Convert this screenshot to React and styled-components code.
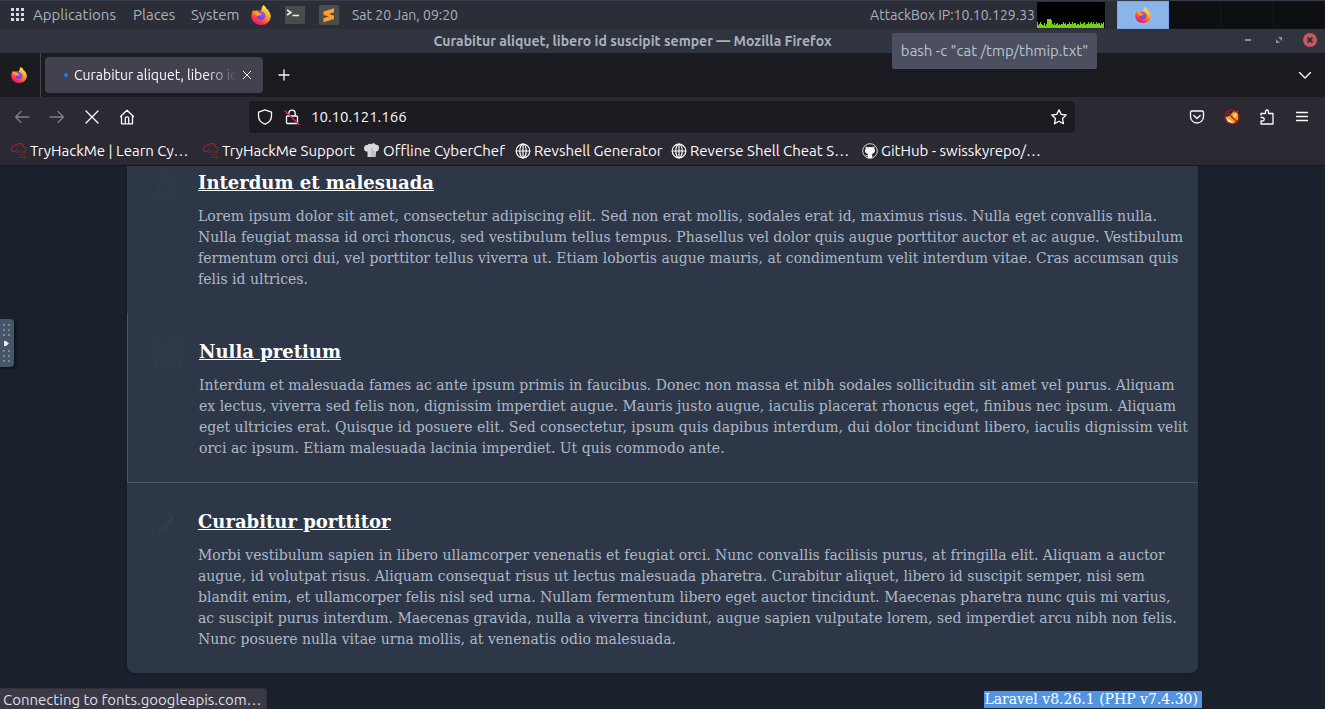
import React from "react";
import styled, { createGlobalStyle } from "styled-components";

const GlobalStyle = createGlobalStyle`
  * { box-sizing: border-box; }
  html, body { margin: 0; background: #1a202c; }
  button { font: inherit; color: inherit; background: none; border: 0; padding: 0; margin: 0; cursor: pointer; }
  svg { display: block; flex: none; }
`;

const ui = `"Ubuntu", "Noto Sans", sans-serif`;

const Desktop = styled.div`
  position: relative;
  display: flex;
  flex-direction: column;
  height: 100vh;
  overflow: hidden;
  font: 15px/20px ${ui};
  color: #fbfbfe;
`;

/* ---------- desktop panel ---------- */
const Panel = styled.header`
  display: flex;
  align-items: center;
  justify-content: space-between;
  flex: none;
  height: 29px;
  padding-left: 10px;
  background: #2b2e37;
  border-top: 1px solid #383c4a;
  color: #a9b1bd;
`;
const PanelGroup = styled.div`
  display: flex;
  align-items: center;
  height: 28px;
`;
const PanelMenu = styled.button`
  display: flex;
  align-items: center;
  gap: 9px;
  width: ${(p) => p.$width}px;
  white-space: nowrap;
`;
const Launcher = styled.button`
  display: flex;
  width: 20px;
  height: 20px;
  margin-right: ${(p) => p.$gap || 14}px;
`;
const Clock = styled.time`
  font-size: 14px;
  white-space: nowrap;
`;
const AddressLabel = styled.span`
  font-size: 14px;
  white-space: nowrap;
  margin-right: 2px;
`;
const Workspaces = styled.div`
  display: flex;
  height: 28px;
  margin-left: 12px;
`;
const Workspace = styled.button`
  display: flex;
  align-items: center;
  justify-content: center;
  width: 52px;
  height: 28px;
  background: ${(p) => (p.$active ? "#8ab4ea" : "#0e0f12")};
  border: 1px solid ${(p) => (p.$active ? "#78a8e8" : "#121317")};
`;

/* ---------- window frame ---------- */
const TitleBar = styled.div`
  display: grid;
  grid-template-columns: 8px 1fr 68px;
  align-items: center;
  flex: none;
  height: 24px;
  padding-right: 8px;
  padding-left: 8px;
  background: #2f343f;
  color: #a9b1bd;
`;
const WindowTitle = styled.h1`
  grid-column: 2;
  margin: 0;
  font-size: 14px;
  font-weight: 600;
  line-height: 24px;
  text-align: center;
`;
const WindowButtons = styled.div`
  display: flex;
  align-items: center;
  justify-content: flex-end;
  gap: 17px;
  padding-bottom: 2px;
`;

const TabStrip = styled.nav`
  display: flex;
  align-items: center;
  flex: none;
  height: 44px;
  background: #1c1b22;
`;
const FirefoxView = styled.button`
  display: flex;
  align-items: center;
  justify-content: center;
  width: 41px;
  height: 44px;
  padding-right: 3px;
  border-right: 1px solid #45444d;
`;
const Tab = styled.div`
  display: flex;
  align-items: center;
  width: 218px;
  height: 36px;
  margin-left: 4px;
  padding: 0 10px 0 19px;
  border-radius: 4px;
  background: #42414d;
  font-size: 14px;
`;
const LoadingDot = styled.span`
  width: 4px;
  height: 4px;
  margin-right: 6px;
  border-radius: 50%;
  background: #0a84ff;
`;
const TabTitle = styled.span`
  flex: 1;
  overflow: hidden;
  white-space: nowrap;
  mask-image: linear-gradient(to left, transparent, #000 32px);
`;
const TabClose = styled.button`
  display: flex;
  margin-left: 4px;
`;
const NewTab = styled.button`
  display: flex;
  margin-left: 13px;
`;
const TabList = styled.button`
  display: flex;
  margin-left: auto;
  margin-right: 12px;
`;

const NavBar = styled.div`
  display: flex;
  align-items: center;
  flex: none;
  height: 39px;
  padding: 0 15px 0 14px;
  background: #2b2a33;
`;
const NavButtons = styled.div`
  display: flex;
  align-items: center;
  gap: 19px;
  width: 235px;
`;
const IconButton = styled.button`
  display: flex;
  opacity: ${(p) => (p.disabled ? 0.4 : 1)};
`;
const UrlBar = styled.form`
  display: flex;
  align-items: center;
  gap: 11px;
  flex: 1;
  height: 32px;
  padding: 0 8px;
  border-radius: 4px;
  background: #1c1b22;
`;
const UrlInput = styled.input`
  flex: 1;
  min-width: 0;
  padding: 0;
  border: 0;
  outline: 0;
  background: none;
  color: #fbfbfe;
  font: 15px/20px ${ui};
`;
const ToolButtons = styled.div`
  display: flex;
  align-items: center;
  gap: 19px;
  margin-left: 114px;
`;
const Bookmarks = styled.nav`
  display: grid;
  grid-template-columns: 192px 161px 151px 156px 191px 1fr;
  align-items: center;
  flex: none;
  height: 30px;
  padding: 0 11px;
  background: #2b2a33;
  border-bottom: 1px solid #15141a;
`;
const Bookmark = styled.a`
  display: flex;
  align-items: center;
  gap: 3px;
  color: inherit;
  text-decoration: none;
  white-space: nowrap;
`;

/* ---------- web page ---------- */
const Page = styled.main`
  flex: 1;
  min-height: 0;
  overflow: hidden;
  background: #1a202c;
  font: 14px/21px "DejaVu Serif", serif;
`;
const Content = styled.div`
  width: calc(100% - 254px);
  margin: 0 auto;
`;
const Card = styled.div`
  background: #2d3748;
  border-radius: 0 0 8px 8px;
  box-shadow: 0 1px 3px rgba(0, 0, 0, 0.2);
`;
const Section = styled.section`
  display: grid;
  grid-template-columns: 32px 1fr;
  column-gap: 15px;
  padding: ${(p) => (p.$clipped ? 3 : 25)}px 8px 23px 24px;
  border: 0 solid #4a5568;
  border-width: ${(p) => (p.$bordered ? "0 0 1px 1px" : "0")};
`;
const SectionTitle = styled.h2`
  margin: 0 0 9px;
  font-size: 18px;
  line-height: 28px;
  font-weight: 600;
`;
const SectionLink = styled.a`
  color: #fff;
  text-decoration: underline;
`;
const SectionText = styled.p`
  margin: 0;
  color: #adb8c6;
`;
const Footer = styled.footer`
  display: flex;
  justify-content: flex-end;
  margin: 16px -4px 0 0;
`;
const Selected = styled.span`
  height: 17px;
  margin-top: 2px;
  padding-right: 4px;
  line-height: 17px;
  background: #5294e2;
  color: #fff;
`;

/* ---------- overlays ---------- */
const Tooltip = styled.div`
  position: absolute;
  top: 33px;
  right: 228px;
  width: 205px;
  height: 36px;
  border-radius: 2px;
  background: #4b4f60;
  color: #bac3cf;
  line-height: 36px;
  text-align: center;
  white-space: nowrap;
`;
const StatusBar = styled.div`
  position: absolute;
  left: 0;
  bottom: 0;
  height: 21px;
  padding: 0 4px 0 3px;
  border: 1px solid #32313b;
  border-width: 1px 1px 0 0;
  border-radius: 0 3px 0 0;
  background: #3a3944;
  color: #dedee6;
  line-height: 21px;
  white-space: nowrap;
`;
const SideHandle = styled.button`
  position: absolute;
  left: 0;
  top: 319px;
  width: 14px;
  height: 48px;
  border-radius: 0 4px 4px 0;
  background: #475569;
  box-shadow: 2px 2px 2px #10141b;
`;

/* ---------- drawings ---------- */
const Firefox = ({ size = 20, id }) => (
  <svg width={size} height={size} viewBox="0 0 20 20" aria-hidden="true">
    <defs>
      <linearGradient id={id + "o"} x1="0.85" y1="0.05" x2="0.3" y2="1">
        <stop offset="0" stopColor="#fff44f" />
        <stop offset="0.35" stopColor="#ffb32c" />
        <stop offset="0.62" stopColor="#ff6a2a" />
        <stop offset="0.85" stopColor="#f5295c" />
        <stop offset="1" stopColor="#e01583" />
      </linearGradient>
      <radialGradient id={id + "p"} cx="0.6" cy="0.3" r="0.8">
        <stop offset="0" stopColor="#9059ff" />
        <stop offset="1" stopColor="#6b3fd0" />
      </radialGradient>
    </defs>
    <path d="M12.3 0c2 1.300 3 2.700 3.400 4.100 1 .3 1.500 1 1.900 1.800 1.500 1.800 2.200 3.800 2.200 5.900A9.600 8.700 0 0 1 10 20C4.500 20 .3 16.200.3 11 .3 8.300 1.300 6 2.700 4.400c0 .8.100 1.300.4 1.800C4.600 5.300 6 5.500 7.300 5.800 8.800 5.600 9.500 5.700 10 6c.6-2.600 1-4.500 2.300-6z" fill={"url(#" + id + "o)"} />
    <path d="M7 6.400c2.700-1 7 .3 7.400 4.200.2 2.700-1.800 4.500-4.200 4.500-2.700 0-4.500-1.700-4.700-4 1.200.4 2.200.2 3-.5.6-.6 1.400-.6 1.700-1.200-.3-.8-1.800-.7-2.300-1.100z" fill={"url(#" + id + "p)"} />
    <path d="M2.500 6.800C4.300 5.500 6.400 6 7.300 7.200l2.900 1.300c-.3.800-1.300 1-1.800 1.500-1 1-2.500.8-3.300.2z" fill="#ff9a2c" />
  </svg>
);

const GridIcon = () => (
  <svg width="14" height="14" viewBox="0 0 14 14" fill="#d3dae3" aria-hidden="true">
    {[0, 5, 10].map((y) => [0, 5, 10].map((x) => <rect key={x + "-" + y} x={x + 1} y={y} width="3" height="3" />))}
  </svg>
);

const TerminalIcon = () => (
  <svg width="20" height="20" viewBox="0 0 20 20" aria-hidden="true">
    <rect x="0" y="1" width="20" height="18" rx="1" fill="#4b4d4d" />
    <path d="M2 5l4 2.500L2 10M7.500 10.500H14" fill="none" stroke="#eee" strokeWidth="1.500" />
  </svg>
);

const SublimeIcon = () => (
  <svg width="20" height="20" viewBox="0 0 20 20" aria-hidden="true">
    <rect width="20" height="20" rx="1" fill="#4b4d4d" />
    <path d="M4.500 6.500L15 3.300v4L10 9l5 1.700v3.200L4.500 17.200v-4L9.800 11.500 4.500 9.700z" fill="#ff9d2f" />
    <path d="M4.500 9.700l5.300 1.800 5.200 1.600-10.500-3z" fill="#d07a18" />
  </svg>
);

const loads = [6, 3, 4, 6, 4, 3, 3, 5, 2, 4, 9, 9, 9, 9, 8, 4, 3, 5, 3, 4, 5, 3, 4, 3, 4, 4, 6, 4, 5, 3, 4, 4, 6, 4, 4, 6, 4, 5, 5, 3, 4, 4, 3, 6, 4, 4, 5, 6, 3, 4, 4, 6, 4, 5, 6, 4, 6, 4, 4, 6, 4, 5, 5, 3, 5, 4, 6];
const LoadGraph = () => (
  <svg width="68" height="26" viewBox="0 0 68 26" aria-label="CPU load">
    <rect width="68" height="26" fill="#000" />
    {loads.map((h, i) => <rect key={i} x={i} y={26 - h} width="1" height={h} fill="#73d216" />)}
  </svg>
);

const Line = ({ size = 16, width = 1.3, color = "#fbfbfe", children }) => (
  <svg width={size} height={size} viewBox="0 0 16 16" fill="none" stroke={color} strokeWidth={width} strokeLinecap="round" strokeLinejoin="round" aria-hidden="true">
    {children}
  </svg>
);

const Hackme = () => (
  <Line color="#a81a22" width={1.2}>
    <path d="M5 8.500H3a2.500 2.500 0 0 1-.2-5A2.500 2.500 0 0 1 6 2a3.600 3.600 0 0 1 6.500 2A2.200 2.200 0 0 1 14.500 7.500M5.500 6.500h1M6.500 9.500l1-1.500M10.500 9h4M8.500 12h1.500M12.500 11.500H14M9.500 14.500h2M13 14l1.500.8" />
  </Line>
);
const Chef = () => (
  <svg width="16" height="15" viewBox="0 0 16 15" aria-hidden="true">
    <path d="M3.500 14V8.500C1 9 0 7 0 5.200 0 3 1.500 1.500 3.500 2 4.500.4 6 .5 7.200 1.200c1.500-1.500 3.800-1 4.600.6 2-.3 3.200 1 3.200 3 0 2.200-1 3.700-3 3.700L11.600 14z" fill="#d8d8d8" />
    <path d="M8 5v9M10 8v6" stroke="#aaa" />
  </svg>
);
const Globe = () => (
  <Line width={1.2}>
    <circle cx="8" cy="8" r="6.800" />
    <ellipse cx="8" cy="8" rx="3.200" ry="6.800" />
    <path d="M1.200 8h13.600M8 1.200v13.600" />
  </Line>
);
const Github = () => (
  <svg width="16" height="16" viewBox="0 0 16 16" aria-hidden="true">
    <circle cx="8" cy="8" r="7.300" fill="#24232b" stroke="#d8d8dc" strokeWidth="1" />
    <path d="M3.700 3.400c.8 0 1.500.4 2 .8a9 9 0 0 1 4.600 0c.6-.5 1.200-.8 2-.8.3.8.2 1.500 0 2 1.600 2.500.4 5.200-2.500 5.500.4.5.5 1 .5 1.600v2.400H5.700v-1.800c-1.500.3-1.900-.4-2.300-1.200.8.100 1.200.7 2.300.4 0-.6.2-1 .5-1.400C3.300 10.600 2.100 8 3.700 5.400c-.2-.6-.3-1.200 0-2z" fill="#f5f5f5" />
  </svg>
);
const FoxProxy = () => (
  <svg width="16" height="16" viewBox="0 0 16 16" aria-hidden="true">
    <path d="M1 8l4-1 5-5 1 2 3-2v9l-5 4-5-3z" fill="#f59a23" />
    <path d="M2 9l4 2 3 3-5-1z" fill="#fff0d0" />
    <path d="M9 6l3-3 1 4-3 2z" fill="#ffd062" />
    <circle cx="8" cy="8" r="7" fill="none" stroke="#b51a1a" strokeWidth="1.200" />
    <path d="M3 3l10 10" stroke="#b51a1a" strokeWidth="1.200" />
  </svg>
);

const Faint = ({ children }) => (
  <svg width="32" height="32" viewBox="0 0 32 32" fill="none" stroke="#2f3e43" strokeWidth="1.500" strokeLinejoin="round" aria-hidden="true">
    {children}
  </svg>
);
const Tree = () => (
  <Faint>
    <path d="M15.500 1l1 2 2 .3-1.500 1.500.4 2-1.900-1-1.900 1 .4-2-1.500-1.500 2-.3zM15.500 6L10 13h2.500L7 20h2.500L4 26.500h23L21.500 20H24l-5.500-7H21zM13 27v4h5v-4M15 12h2M12 18h1M18 19h2M10 23h2" />
  </Faint>
);
const Gift = () => (
  <Faint>
    <path d="M3 8h26v6H3zM4 14v15h24V14M13 8v21M18 8v21M15.500 7C12 7 5 9 4 5s6-5 11.500 2C19 1 26 1 27 5s-6 2-11.500 2zM1 3h4M26 3h5" />
  </Faint>
);
const Cane = () => (
  <Faint>
    <path d="M7 26L19 13c5-4 1-9-5-5" stroke="#30403f" strokeWidth="4" strokeDasharray="4 1" />
  </Faint>
);

const bookmarks = [
  ["TryHackMe | Learn Cy…", Hackme],
  ["TryHackMe Support", Hackme],
  ["Offline CyberChef", Chef],
  ["Revshell Generator", Globe],
  ["Reverse Shell Cheat S…", Globe],
  ["GitHub - swisskyrepo/…", Github],
];

const sections = [
  {
    title: "Interdum et malesuada",
    Icon: Tree,
    clipped: true,
    text: "Lorem ipsum dolor sit amet, consectetur adipiscing elit. Sed non erat mollis, sodales erat id, maximus risus. Nulla eget convallis nulla. Nulla feugiat massa id orci rhoncus, sed vestibulum tellus tempus. Phasellus vel dolor quis augue porttitor auctor et ac augue. Vestibulum fermentum orci dui, vel porttitor tellus viverra ut. Etiam lobortis augue mauris, at condimentum velit interdum vitae. Cras accumsan quis felis id ultrices.",
  },
  {
    title: "Nulla pretium",
    Icon: Gift,
    bordered: true,
    text: "Interdum et malesuada fames ac ante ipsum primis in faucibus. Donec non massa et nibh sodales sollicitudin sit amet vel purus. Aliquam ex lectus, viverra sed felis non, dignissim imperdiet augue. Mauris justo augue, iaculis placerat rhoncus eget, finibus nec ipsum. Aliquam eget ultricies erat. Quisque id posuere elit. Sed consectetur, ipsum quis dapibus interdum, dui dolor tincidunt libero, iaculis dignissim velit orci ac ipsum. Etiam malesuada lacinia imperdiet. Ut quis commodo ante.",
  },
  {
    title: "Curabitur porttitor",
    Icon: Cane,
    text: "Morbi vestibulum sapien in libero ullamcorper venenatis et feugiat orci. Nunc convallis facilisis purus, at fringilla elit. Aliquam a auctor augue, id volutpat risus. Aliquam consequat risus ut lectus malesuada pharetra. Curabitur aliquet, libero id suscipit semper, nisi sem blandit enim, et ullamcorper felis nisl sed urna. Nullam fermentum libero eget auctor tincidunt. Maecenas pharetra nunc quis mi varius, ac suscipit purus interdum. Maecenas gravida, nulla a viverra tincidunt, augue sapien vulputate lorem, sed imperdiet arcu nibh non felis. Nunc posuere nulla vitae urna mollis, at venenatis odio malesuada.",
  },
];

export default function App() {
  return (
    <Desktop>
      <GlobalStyle />
      <Panel>
        <PanelGroup>
          <PanelMenu $width={123}><GridIcon />Applications</PanelMenu>
          <PanelMenu $width={58}>Places</PanelMenu>
          <PanelMenu $width={60}>System</PanelMenu>
          <Launcher aria-label="Firefox"><Firefox id="launch" /></Launcher>
          <Launcher aria-label="Terminal"><TerminalIcon /></Launcher>
          <Launcher $gap={13} aria-label="Sublime Text"><SublimeIcon /></Launcher>
          <Clock>Sat 20 Jan, 09:20</Clock>
        </PanelGroup>
        <PanelGroup>
          <AddressLabel>AttackBox IP:10.10.129.33</AddressLabel>
          <LoadGraph />
          <Workspaces>
            <Workspace $active aria-label="Workspace 1"><Firefox id="ws" size={16} /></Workspace>
            <Workspace aria-label="Workspace 2" />
            <Workspace aria-label="Workspace 3" />
            <Workspace aria-label="Workspace 4" />
          </Workspaces>
        </PanelGroup>
      </Panel>

      <TitleBar>
        <WindowTitle>Curabitur aliquet, libero id suscipit semper — Mozilla Firefox</WindowTitle>
        <WindowButtons>
          <IconButton aria-label="Minimize">
            <svg width="14" height="14" viewBox="0 0 14 14"><path d="M4 7h6" stroke="#a9b1bd" strokeWidth="1.500" /></svg>
          </IconButton>
          <IconButton aria-label="Restore">
            <svg width="14" height="14" viewBox="0 0 14 14" fill="#8b93a1"><path d="M6 4h4v4zM4 6v4h4z" /></svg>
          </IconButton>
          <IconButton aria-label="Close window">
            <svg width="14" height="14" viewBox="0 0 14 14"><circle cx="7" cy="7" r="7" fill="#cc575d" /><path d="M4.500 4.500l5 5m0-5l-5 5" stroke="#2f343f" strokeWidth="2" /></svg>
          </IconButton>
        </WindowButtons>
      </TitleBar>

      <TabStrip>
        <FirefoxView aria-label="Firefox View"><Firefox id="view" size={16} /></FirefoxView>
        <Tab>
          <LoadingDot />
          <TabTitle>Curabitur aliquet, libero id</TabTitle>
          <TabClose aria-label="Close tab"><Line size={12}><path d="M3 3l10 10M13 3L3 13" /></Line></TabClose>
        </Tab>
        <NewTab aria-label="New tab"><Line><path d="M8 3v10M3 8h10" /></Line></NewTab>
        <TabList aria-label="List all tabs"><Line><path d="M2.500 5.500L8 11l5.500-5.500" /></Line></TabList>
      </TabStrip>

      <NavBar>
        <NavButtons>
          <IconButton disabled aria-label="Back"><Line><path d="M15 8H1.500M7 2.500L1.500 8 7 13.500" /></Line></IconButton>
          <IconButton disabled aria-label="Forward"><Line><path d="M1 8h13.500M9 2.500L14.500 8 9 13.500" /></Line></IconButton>
          <IconButton aria-label="Stop"><Line><path d="M2 2l12 12M14 2L2 14" /></Line></IconButton>
          <IconButton aria-label="Home"><Line><path d="M1.500 7.500L8 1.200l6.500 6.300M2.500 7v7.800h11V7M6.300 14.500V9.500a1.700 1.700 0 0 1 3.400 0v5" /></Line></IconButton>
        </NavButtons>
        <UrlBar>
          <IconButton type="button" aria-label="Tracking protection"><Line><path d="M8 .8l6.500 2.400v3.500c0 4-2.500 7-6.500 8.500-4-1.500-6.500-4.500-6.500-8.500V3.200z" /></Line></IconButton>
          <IconButton type="button" aria-label="Connection not secure">
            <Line><rect x="2.500" y="7" width="11" height="7.500" rx="1" /><path d="M4.800 6.500V4.300a3.200 3.200 0 0 1 6.400 0v2.200" /><path d="M1 2l14 13.500" stroke="#e22850" /></Line>
          </IconButton>
          <UrlInput aria-label="Address" defaultValue="10.10.121.166" />
          <IconButton type="button" aria-label="Bookmark this page"><Line><path d="M8 .8l2.200 4.600 5 .6-3.700 3.500 1 5.200L8 12.200l-4.500 2.500 1-5.200L.8 6l5-.6z" /></Line></IconButton>
        </UrlBar>
        <ToolButtons>
          <IconButton aria-label="Pocket"><Line><path d="M3 2h10a1.500 1.500 0 0 1 1.500 1.500V7.500a6.500 6.500 0 0 1-13 0V3.500A1.500 1.500 0 0 1 3 2zM4.800 6.500L8 9.500l3.200-3" /></Line></IconButton>
          <IconButton aria-label="FoxyProxy"><FoxProxy /></IconButton>
          <IconButton aria-label="Extensions"><Line><path d="M2 6V4.500h4.500V2.500a1.500 1.500 0 0 1 3 0v2h4.500v10.500H2v-3h1.500a1.700 1.700 0 0 0 0-3.500H2" /></Line></IconButton>
          <IconButton aria-label="Menu"><Line><path d="M2.500 3.500h11M2.500 7.500h11M2.500 11.500h11" /></Line></IconButton>
        </ToolButtons>
      </NavBar>
      <Bookmarks aria-label="Bookmarks">
        {bookmarks.map(([label, Icon]) => (
          <Bookmark href="#" key={label}><Icon />{label}</Bookmark>
        ))}
      </Bookmarks>

      <Page>
        <Content>
          <Card>
            {sections.map(({ title, Icon, text, clipped, bordered }) => (
              <Section key={title} $clipped={clipped} $bordered={bordered}>
                <Icon />
                <div>
                  <SectionTitle><SectionLink href="#">{title}</SectionLink></SectionTitle>
                  <SectionText>{text}</SectionText>
                </div>
              </Section>
            ))}
          </Card>
          <Footer><Selected>Laravel v8.26.1 (PHP v7.4.30)</Selected></Footer>
        </Content>
      </Page>

      <Tooltip role="tooltip">bash -c "cat /tmp/thmip.txt"</Tooltip>
      <SideHandle aria-label="Show control bar">
        <svg width="14" height="48" viewBox="0 0 14 48" fill="#7b8696">
          {[5, 10, 15, 31, 36, 41].map((y) => [3, 8].map((x) => <rect key={x + "-" + y} x={x} y={y} width="2" height="2" />))}
          <path d="M4 22h2l3 2.500L6 27H4z" fill="#e8eaed" />
        </svg>
      </SideHandle>
      <StatusBar role="status">Connecting to fonts.googleapis.com…</StatusBar>
    </Desktop>
  );
}
